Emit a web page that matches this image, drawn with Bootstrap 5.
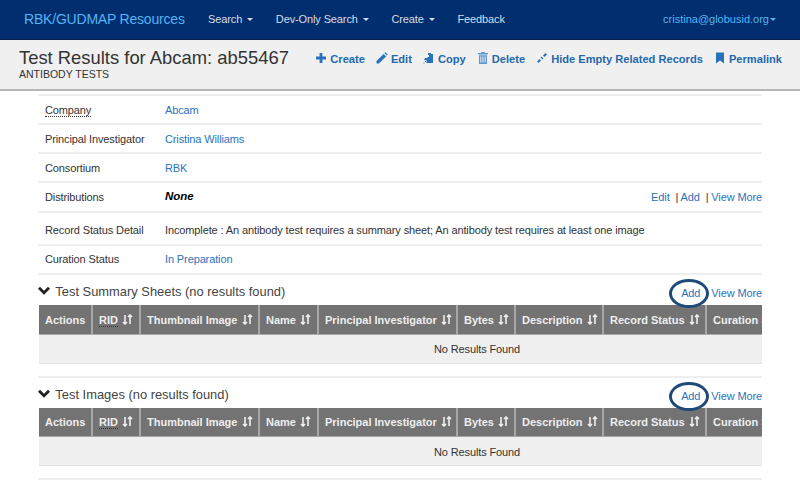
<!DOCTYPE html>
<html lang="en">
<head>
  <meta charset="UTF-8" />
  <title>Test Results for Abcam: ab55467</title>
  <link href="https://cdn.jsdelivr.net/npm/bootstrap@5.3.0/dist/css/bootstrap.min.css" rel="stylesheet">
  <style>
    html, body { height: 500px; overflow: hidden; }
    body { font-family: "Liberation Sans", Arial, sans-serif; font-size: 11px; letter-spacing: -0.12px; color: #333; background: #fff; }
    a { color: #2a73bb; text-decoration: none; }

    /* top navbar */
    .top-nav { background: #012e6f; height: 40px; padding: 0 24px 0 24px; border-bottom: 1px solid #0d2347; font-size: 11px; }
    .brand-link { color: #55b3f3; font-size: 14px; letter-spacing: -0.2px; width: 184px; }
    .menu-link { color: #d8dde6; margin-right: 22.7px; }
    .user-link { color: #55b3f3; font-size: 11px; letter-spacing: 0; }
    .caret-mark { display: inline-block; border-top: 3.5px solid currentColor; border-left: 3.5px solid transparent; border-right: 3.5px solid transparent; margin-left: 5px; vertical-align: 2px; }
    .user-link .caret-mark { margin-left: 1px; }

    /* record title bar */
    .title-bar { background: #f0f0f0; height: 51px; padding: 7px 18px 0 19px; border-bottom: 2px solid #b5b5b5; }
    .title-text { font-size: 18.4px; line-height: 21px; color: #333; white-space: nowrap; letter-spacing: 0; }
    .sub-text { font-size: 10.5px; line-height: 13px; color: #333; letter-spacing: 0; }
    .action-row { gap: 11px; padding-top: 4px; }
    .action-link { font-weight: 700; font-size: 11.1px; letter-spacing: 0; color: #2468ae; white-space: nowrap; height: 20px; }
    .action-link svg { width: 12px; height: 12px; vertical-align: -1px; fill: #2a73bb; }
    .action-link svg.pale-ico { fill: #5c96cf; }

    /* record rows */
    .record-wrap { margin: 3px 38px 0 38px; }
    .entry-row { border-top: 2px solid #eee; height: 29px; padding-left: 7px; padding-top: 2px; }
    .entry-row.tall { height: 33px; padding-top: 4px; }
    .entry-row.mid { height: 30px; padding-top: 0; }
    .entry-row.flat { padding-top: 0; }
    .entry-label { width: 120px; flex-shrink: 0; }
    .dot-under { border-bottom: 1px dotted #333; }
    .none-text { font-size: 11.5px; letter-spacing: 0; }

    /* related tables */
    .section-head { border-top: 2px solid #eee; height: 32px; padding: 8px 0 0 0; }
    .section-title { font-size: 12.9px; line-height: 18px; color: #444; letter-spacing: 0; }
    .section-title svg { width: 12px; height: 10px; margin-right: 2px; vertical-align: 0; }
    .section-links { padding-top: 2px; }
    .add-ring { position: relative; margin-right: 8px; }
    .add-ring::after { content: ""; position: absolute; left: -12px; top: -8px; width: 40px; height: 29px; border: 3px solid #1d4a78; border-radius: 50%; }
    .table-clip { width: 723px; margin: 0 0 12px 1px; overflow: hidden; }
    .grid-table { width: 876px; table-layout: fixed; border-collapse: collapse; }
    .grid-table th { background: #737373; color: #eee; height: 29px; padding: 1px 0 0 6px; font-size: 11px; font-weight: 700; letter-spacing: 0; border-right: 2px solid #a8a8a8; white-space: nowrap; overflow: hidden; vertical-align: middle; }
    .grid-table th:last-child { border-right: 0; }
    .grid-table td { background: #f0f0f0; height: 29px; text-align: center; padding: 2px 0 0 0; border-bottom: 1px solid #e2e2e2; border-top: 1px solid #a8a8a8; }
    .sort-arrows { width: 11px; height: 11px; vertical-align: -1px; margin-left: 1px; fill: none; stroke: #eee; stroke-width: 1.6; }
    .c-act { width: 53px; } .c-rid { width: 48px; } .c-thumb { width: 119px; } .c-name { width: 59px; }
    .c-pi { width: 139px; } .c-bytes { width: 58px; } .c-desc { width: 88px; } .c-status { width: 103px; } .c-cur { width: 209px; }
  </style>
</head>
<body>
  <!-- Navbar -->
  <nav class="top-nav d-flex align-items-center">
    <a class="brand-link" href="#">RBK/GUDMAP Resources</a>
    <a class="menu-link" href="#">Search<span class="caret-mark"></span></a>
    <a class="menu-link" href="#">Dev-Only Search<span class="caret-mark"></span></a>
    <a class="menu-link" href="#">Create<span class="caret-mark"></span></a>
    <a class="menu-link" href="#">Feedback</a>
    <a class="user-link ms-auto" href="#">cristina@globusid.org<span class="caret-mark"></span></a>
  </nav>

  <!-- Title bar -->
  <div class="title-bar d-flex">
    <div>
      <div class="title-text">Test Results for Abcam: ab55467</div>
      <div class="sub-text">ANTIBODY TESTS</div>
    </div>
    <div class="action-row d-flex ms-auto">
      <a class="action-link" href="#"><svg viewBox="0 0 12 12"><path d="M4.600 1h2.800v3.600H11v2.800H7.400V11H4.600V7.400H1V4.600h3.600z"/></svg> Create</a>
      <a class="action-link" href="#"><svg viewBox="0 0 12 12"><path d="M.5 9 7.600 1.900l2.500 2.500L3 11.500H.5zM8.400 1.100 9.400.2 11.800 2.600l-.9 1z"/></svg> Edit</a>
      <a class="action-link" href="#"><svg viewBox="0 0 12 12"><path d="M5 1h3v1h2v9H3.500V8H1l1-2h2l1-1h1V3H5zM2 9h1v1H2zM.5 10.500h1v1h-1z"/></svg> Copy</a>
      <a class="action-link" href="#"><svg class="pale-ico" viewBox="0 0 12 12"><path d="M4.500 0h3l.5 1h3v1.500H1V1h3zM2 3.300h8V12H2zm1.300 1.200v6h1v-6zm2.200 0v6h1v-6zm2.200 0v6h1v-6z"/></svg> Delete</a>
      <a class="action-link" href="#"><svg viewBox="0 0 12 12"><path d="M1 9.500 3.500 7 5 8.500 2.500 11zM7 3.500 9.500 1 11 2.500 8.500 5zM5.500 4.500l2 2-1 1-2-2z"/></svg> Hide Empty Related Records</a>
      <a class="action-link" href="#"><svg viewBox="0 0 12 12"><path d="M2 .5h8v11L6 8.500 2 11.500z"/></svg> Permalink</a>
    </div>
  </div>

  <div class="record-wrap">
    <div class="entry-row d-flex align-items-center"><div class="entry-label"><span class="dot-under">Company</span></div><a href="#">Abcam</a></div>
    <div class="entry-row d-flex align-items-center"><div class="entry-label">Principal Investigator</div><a href="#">Cristina Williams</a></div>
    <div class="entry-row d-flex align-items-center"><div class="entry-label">Consortium</div><a href="#">RBK</a></div>
    <div class="entry-row mid d-flex align-items-center">
      <div class="entry-label">Distributions</div><strong class="none-text fst-italic text-black">None</strong>
      <div class="ms-auto"><a href="#">Edit</a> &nbsp;| <a href="#">Add</a> &nbsp;| <a href="#">View More</a></div>
    </div>
    <div class="entry-row tall d-flex align-items-center"><div class="entry-label">Record Status Detail</div><span>Incomplete : An antibody test requires a summary sheet; An antibody test requires at least one image</span></div>
    <div class="entry-row flat d-flex align-items-center"><div class="entry-label">Curation Status</div><a href="#">In Preparation</a></div>

    <div class="section-head d-flex justify-content-between">
      <div class="section-title"><svg viewBox="0 0 12 10"><path d="M0 2.800 2 .8l4 4 4-4 2 2-6 6z" fill="#222"/></svg> Test Summary Sheets (no results found)</div>
      <div class="section-links"><a class="add-ring" href="#">Add</a> <a href="#">View More</a></div>
    </div>
    <div class="table-clip">
    <table class="grid-table">
      <colgroup><col class="c-act"><col class="c-rid"><col class="c-thumb"><col class="c-name"><col class="c-pi"><col class="c-bytes"><col class="c-desc"><col class="c-status"><col class="c-cur"></colgroup>
      <thead><tr>
        <th>Actions</th>
        <th><span class="dot-under">RID</span> <svg class="sort-arrows" viewBox="0 0 11 11"><path d="M3 1v9M1 8l2 2 2-2M8 10V1M6 3l2-2 2 2"/></svg></th>
        <th>Thumbnail Image <svg class="sort-arrows" viewBox="0 0 11 11"><path d="M3 1v9M1 8l2 2 2-2M8 10V1M6 3l2-2 2 2"/></svg></th>
        <th>Name <svg class="sort-arrows" viewBox="0 0 11 11"><path d="M3 1v9M1 8l2 2 2-2M8 10V1M6 3l2-2 2 2"/></svg></th>
        <th>Principal Investigator <svg class="sort-arrows" viewBox="0 0 11 11"><path d="M3 1v9M1 8l2 2 2-2M8 10V1M6 3l2-2 2 2"/></svg></th>
        <th>Bytes <svg class="sort-arrows" viewBox="0 0 11 11"><path d="M3 1v9M1 8l2 2 2-2M8 10V1M6 3l2-2 2 2"/></svg></th>
        <th>Description <svg class="sort-arrows" viewBox="0 0 11 11"><path d="M3 1v9M1 8l2 2 2-2M8 10V1M6 3l2-2 2 2"/></svg></th>
        <th>Record Status <svg class="sort-arrows" viewBox="0 0 11 11"><path d="M3 1v9M1 8l2 2 2-2M8 10V1M6 3l2-2 2 2"/></svg></th>
        <th>Curation Status</th>
      </tr></thead>
      <tbody><tr><td colspan="9">No Results Found</td></tr></tbody>
    </table>
    </div>

    <div class="section-head d-flex justify-content-between">
      <div class="section-title"><svg viewBox="0 0 12 10"><path d="M0 2.800 2 .8l4 4 4-4 2 2-6 6z" fill="#222"/></svg> Test Images (no results found)</div>
      <div class="section-links"><a class="add-ring" href="#">Add</a> <a href="#">View More</a></div>
    </div>
    <div class="table-clip">
    <table class="grid-table">
      <colgroup><col class="c-act"><col class="c-rid"><col class="c-thumb"><col class="c-name"><col class="c-pi"><col class="c-bytes"><col class="c-desc"><col class="c-status"><col class="c-cur"></colgroup>
      <thead><tr>
        <th>Actions</th>
        <th><span class="dot-under">RID</span> <svg class="sort-arrows" viewBox="0 0 11 11"><path d="M3 1v9M1 8l2 2 2-2M8 10V1M6 3l2-2 2 2"/></svg></th>
        <th>Thumbnail Image <svg class="sort-arrows" viewBox="0 0 11 11"><path d="M3 1v9M1 8l2 2 2-2M8 10V1M6 3l2-2 2 2"/></svg></th>
        <th>Name <svg class="sort-arrows" viewBox="0 0 11 11"><path d="M3 1v9M1 8l2 2 2-2M8 10V1M6 3l2-2 2 2"/></svg></th>
        <th>Principal Investigator <svg class="sort-arrows" viewBox="0 0 11 11"><path d="M3 1v9M1 8l2 2 2-2M8 10V1M6 3l2-2 2 2"/></svg></th>
        <th>Bytes <svg class="sort-arrows" viewBox="0 0 11 11"><path d="M3 1v9M1 8l2 2 2-2M8 10V1M6 3l2-2 2 2"/></svg></th>
        <th>Description <svg class="sort-arrows" viewBox="0 0 11 11"><path d="M3 1v9M1 8l2 2 2-2M8 10V1M6 3l2-2 2 2"/></svg></th>
        <th>Record Status <svg class="sort-arrows" viewBox="0 0 11 11"><path d="M3 1v9M1 8l2 2 2-2M8 10V1M6 3l2-2 2 2"/></svg></th>
        <th>Curation Status</th>
      </tr></thead>
      <tbody><tr><td colspan="9">No Results Found</td></tr></tbody>
    </table>
    </div>
    <div class="section-head"></div>
  </div>

  <script src="https://cdn.jsdelivr.net/npm/bootstrap@5.3.0/dist/js/bootstrap.bundle.min.js"></script>
</body>
</html>
